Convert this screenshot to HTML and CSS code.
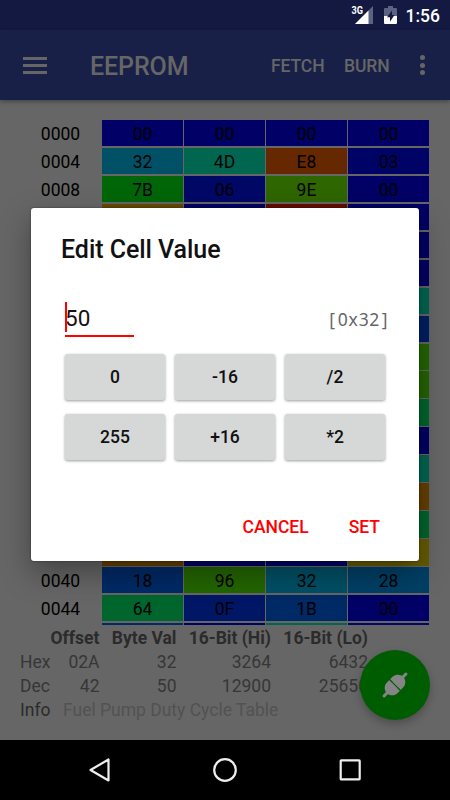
FILE: index.html
```html
<!DOCTYPE html>
<html lang="en">

<head>
    <meta charset="UTF-8">
    <meta name="viewport" content="width=device-width, initial-scale=1.0">
    <title>EEPROM</title>
    <link rel="stylesheet" href="styles.css">
</head>

<body>
    <!-- status bar -->
    <div class="status_bar">
        <svg class="signal" width="24" height="20" viewBox="0 0 24 20">
            <path d="M23 1V19H5z" fill="#5e6282" />
            <path d="M18.5 5.5V19H5z" fill="#fff" />
            <text x="1.5" y="9.3" class="signal_text" textLength="11.5" lengthAdjust="spacingAndGlyphs">3G</text>
        </svg>
        <svg class="battery" width="13" height="18" viewBox="0 0 13 18">
            <path d="M4 0H9V2H12q1 0 1 1V10H0V3q0-1 1-1H4z" fill="#5e6282" />
            <path d="M0 10H13V17q0 1-1 1H1q-1 0-1-1z" fill="#fff" />
            <path d="M8 4.5L3 11.2H6V15.8L10.5 9H8z" fill="#131940" />
        </svg>
        <span class="clock">1:56</span>
    </div>

    <!-- toolbar -->
    <div class="toolbar">
        <div class="menu_icon">
            <span></span>
            <span></span>
            <span></span>
        </div>
        <h1 class="title">EEPROM</h1>
        <div class="action fetch">FETCH</div>
        <div class="action burn">BURN</div>
        <div class="more_icon">
            <span></span>
            <span></span>
            <span></span>
        </div>
    </div>

    <!-- memory table -->
    <div class="content">
        <div class="memory">
            <span class="addr">0000</span><span class="cell c0">00</span><span class="cell c0">00</span><span class="cell c0">00</span><span class="cell c0">00</span>
            <span class="addr">0004</span><span class="cell cyan">32</span><span class="cell teal">4D</span><span class="cell rust">E8</span><span class="cell c1">03</span>
            <span class="addr">0008</span><span class="cell green">7B</span><span class="cell c2">06</span><span class="cell lime">9E</span><span class="cell c0">00</span>
            <span class="addr"></span><span class="cell amber"></span><span class="cell c1"></span><span class="cell red"></span><span class="cell c0"></span>
            <span class="addr"></span><span class="cell"></span><span class="cell"></span><span class="cell"></span><span class="cell c0"></span>
            <span class="addr"></span><span class="cell"></span><span class="cell"></span><span class="cell"></span><span class="cell c0"></span>
            <span class="addr"></span><span class="cell"></span><span class="cell"></span><span class="cell"></span><span class="cell teal"></span>
            <span class="addr"></span><span class="cell"></span><span class="cell"></span><span class="cell"></span><span class="cell navy"></span>
            <span class="addr"></span><span class="cell"></span><span class="cell"></span><span class="cell"></span><span class="cell grass"></span>
            <span class="addr"></span><span class="cell"></span><span class="cell"></span><span class="cell"></span><span class="cell grass"></span>
            <span class="addr"></span><span class="cell"></span><span class="cell"></span><span class="cell"></span><span class="cell mint"></span>
            <span class="addr"></span><span class="cell"></span><span class="cell"></span><span class="cell"></span><span class="cell c0"></span>
            <span class="addr"></span><span class="cell"></span><span class="cell"></span><span class="cell"></span><span class="cell teal"></span>
            <span class="addr"></span><span class="cell"></span><span class="cell"></span><span class="cell"></span><span class="cell orange"></span>
            <span class="addr"></span><span class="cell"></span><span class="cell"></span><span class="cell"></span><span class="cell mint"></span>
            <span class="addr"></span><span class="cell orange"></span><span class="cell c1"></span><span class="cell c1"></span><span class="cell yellow"></span>
            <span class="addr">0040</span><span class="cell blue">18</span><span class="cell grass">96</span><span class="cell cyan">32</span><span class="cell sky">28</span>
            <span class="addr">0044</span><span class="cell mint">64</span><span class="cell c3">0F</span><span class="cell blue">1B</span><span class="cell c0">00</span>
            <span class="addr"></span><span class="cell blue"></span><span class="cell c1"></span><span class="cell teal"></span><span class="cell c2"></span>
        </div>

        <!-- details of the selected cell -->
        <table class="details">
            <tr class="details_head">
                <th></th>
                <th>Offset</th>
                <th>Byte Val</th>
                <th>16-Bit (Hi)</th>
                <th>16-Bit (Lo)</th>
            </tr>
            <tr>
                <td class="label">Hex</td>
                <td>02A</td>
                <td>32</td>
                <td>3264</td>
                <td>6432</td>
            </tr>
            <tr>
                <td class="label">Dec</td>
                <td>42</td>
                <td>50</td>
                <td>12900</td>
                <td>25650</td>
            </tr>
            <tr>
                <td class="label info">Info</td>
                <td class="info_text" colspan="4">Fuel Pump Duty Cycle Table</td>
            </tr>
        </table>
    </div>

    <!-- connect button -->
    <div class="fab">
        <svg width="30" height="30" viewBox="-15 -15 30 30">
            <g transform="rotate(-45)" fill="#858585">
                <path d="M-15.5 0H15.5" stroke="#858585" stroke-width="3" stroke-linecap="round" />
                <path d="M-0.5 -7.5V7.5H-4.5C-9 7-11.5 3.5-11.5 0S-9-7-4.5-7.5z" />
                <path d="M0.5 -7.5V7.5H4.5C9 7 11.5 3.5 11.5 0S9-7 4.5-7.5z" />
                <path d="M0 -8V-3.6M0 -2.4V2.4M0 3.6V8" stroke="#005c00" stroke-width="1" />
            </g>
        </svg>
    </div>

    <!-- navigation bar -->
    <div class="nav_bar">
        <svg width="24" height="26" viewBox="0 0 24 26">
            <path d="M20.5 2.5V23.5L2.5 13z" />
        </svg>
        <svg width="26" height="26" viewBox="0 0 26 26">
            <circle cx="13" cy="13" r="10.8" />
        </svg>
        <svg width="24" height="24" viewBox="0 0 24 24">
            <rect x="2.7" y="2.4" width="19" height="19" rx="0.6" />
        </svg>
    </div>

    <!-- edit dialog -->
    <div class="dialog">
        <h2 class="dialog_title">Edit Cell Value</h2>
        <div class="value_row">
            <div class="value_input">50</div>
            <div class="hex_value"><span>[</span><span>0</span><span>x</span><span>3</span><span>2</span><span>]</span></div>
        </div>
        <div class="keys">
            <button class="key">0</button>
            <button class="key">-16</button>
            <button class="key">/2</button>
            <button class="key">255</button>
            <button class="key">+16</button>
            <button class="key">*2</button>
        </div>
        <div class="dialog_actions">
            <button class="text_btn">CANCEL</button>
            <button class="text_btn">SET</button>
        </div>
    </div>
</body>

</html>
```

FILE: styles.css
```css
* {
    box-sizing: border-box;
}

body {
    margin: 0;
    width: 450px;
    height: 800px;
    display: flex;
    flex-direction: column;
    overflow: hidden;
    position: relative;
    background-color: #666;
    font-family: Roboto, "Liberation Sans", sans-serif;
    font-size: 17.5px;
}

.status_bar {
    height: 30px;
    display: flex;
    align-items: center;
    justify-content: flex-end;
    padding-right: 10px;
    background-color: #131940;
}

.signal {
    margin-right: 10px;
}

.signal_text {
    font-size: 10.5px;
    font-weight: bold;
    fill: #fff;
}

.battery {
    margin-right: 9px;
}

.clock {
    padding-top: 1px;
    color: #fff;
    font-size: 17.5px;
    font-weight: 500;
}

.toolbar {
    height: 70px;
    flex: none;
    display: flex;
    align-items: center;
    padding: 0 25px 0 23px;
    background-color: #192048;
    color: #666;
    box-shadow: 0 2px 4px rgba(0, 0, 0, 0.3);
}

.menu_icon {
    width: 24px;
    display: flex;
    flex-direction: column;
    gap: 4px;
}

.menu_icon span {
    height: 3px;
    background-color: #666;
}

.title {
    margin: 0 0 0 43px;
    padding-top: 2px;
    font-size: 25px;
    font-weight: 500;
    letter-spacing: -0.1px;
    width: 181px;
}

.action {
    padding-top: 1px;
    font-weight: 500;
    letter-spacing: -0.1px;
}

.fetch {
    width: 73px;
}

.burn {
    flex: 1;
}

.more_icon {
    width: 5px;
    display: flex;
    flex-direction: column;
    gap: 2.5px;
}

.more_icon span {
    height: 5px;
    border-radius: 50%;
    background-color: #666;
}

.content {
    flex: 1;
    padding: 20px 21px 0 20px;
}

.memory {
    height: 505px;
    overflow: hidden;
    display: grid;
    grid-template-columns: 81px repeat(4, 1fr);
    grid-auto-rows: 26.44px;
    gap: 1.5px 1px;
}

.addr,
.cell {
    display: flex;
    align-items: center;
    justify-content: center;
    padding-top: 1px;
    color: #000;
}

.c0 {
    background-color: #000066;
}

.c1 {
    background-color: #000366;
}

.c2 {
    background-color: #000866;
}

.c3 {
    background-color: #001766;
}

.navy {
    background-color: #001f66;
}

.blue {
    background-color: #002a66;
}

.sky {
    background-color: #004066;
}

.cyan {
    background-color: #005066;
}

.teal {
    background-color: #006650;
}

.mint {
    background-color: #00662d;
}

.green {
    background-color: #006608;
}

.grass {
    background-color: #236600;
}

.lime {
    background-color: #2e6600;
}

.yellow {
    background-color: #665c00;
}

.amber {
    background-color: #664a00;
}

.orange {
    background-color: #664000;
}

.rust {
    background-color: #662800;
}

.red {
    background-color: #660c00;
}

.details {
    border-collapse: collapse;
    table-layout: fixed;
    width: 348px;
    margin-top: 2px;
    color: #363636;
}

.details th,
.details td {
    height: 23.8px;
    padding: 0;
    text-align: right;
    line-height: 23px;
    white-space: nowrap;
}

.details th:nth-child(1) {
    width: 29px;
}

.details th:nth-child(2) {
    width: 50.5px;
}

.details th:nth-child(3) {
    width: 77px;
}

.details th:nth-child(4) {
    width: 94.5px;
}

.details_head {
    color: #2b2b2b;
}

.details .label {
    text-align: left;
}

.details .info {
    color: #2b2b2b;
}

.details .info_text {
    text-align: left;
    padding-left: 14px;
    color: #525252;
}

.fab {
    position: absolute;
    right: 20px;
    bottom: 80px;
    width: 70px;
    height: 70px;
    display: flex;
    align-items: center;
    justify-content: center;
    border-radius: 50%;
    background-color: #005c00;
    box-shadow: 0 4px 8px rgba(0, 0, 0, 0.25);
}

.nav_bar {
    height: 60px;
    flex: none;
    display: flex;
    align-items: center;
    justify-content: space-between;
    padding: 0 88px;
    background-color: #000;
}

.nav_bar svg {
    fill: none;
    stroke: #eee;
    stroke-width: 2.2;
    stroke-linejoin: round;
}

.dialog {
    position: absolute;
    top: 208px;
    left: 31px;
    width: 388px;
    height: 353px;
    padding: 26px 30px 0;
    border-radius: 3px;
    background-color: #fff;
    box-shadow: 0 0 2px rgba(0, 0, 0, 0.5), 0 12px 30px rgba(0, 0, 0, 0.35);
}

.dialog_title {
    margin: 0;
    font-size: 25px;
    font-weight: 500;
    line-height: 31px;
    letter-spacing: -0.05px;
    color: #111;
}

.value_row {
    display: flex;
    justify-content: space-between;
    margin: 36px -1px 0 4px;
}

.value_input {
    width: 69px;
    height: 36px;
    padding-top: 1px;
    line-height: 32px;
    font-size: 22.5px;
    color: #111;
    border-bottom: 2px solid #f00;
    background: linear-gradient(#f00, #f00) no-repeat 0 1px / 2px 30px;
}

.hex_value {
    display: flex;
    font-family: "Noto Sans", sans-serif;
    font-size: 17.5px;
    line-height: 37px;
    color: #666;
}

.hex_value span {
    width: 10.5px;
    text-align: center;
}

.keys {
    display: grid;
    grid-template-columns: repeat(3, 100px);
    grid-auto-rows: 46px;
    gap: 14px 10px;
    margin: 16px 0 0 4px;
}

.key {
    border: none;
    border-radius: 2.5px;
    background-color: #d6d7d7;
    box-shadow: 0 1px 3px rgba(0, 0, 0, 0.4);
    font-family: inherit;
    font-size: 17.5px;
    font-weight: 500;
    color: #111;
}

.dialog_actions {
    display: flex;
    justify-content: flex-end;
    gap: 40px;
    margin: 57px 9px 0 0;
}

.text_btn {
    padding: 0;
    border: none;
    background: none;
    font-family: inherit;
    font-size: 17.5px;
    font-weight: 500;
    color: #f00;
}
```
